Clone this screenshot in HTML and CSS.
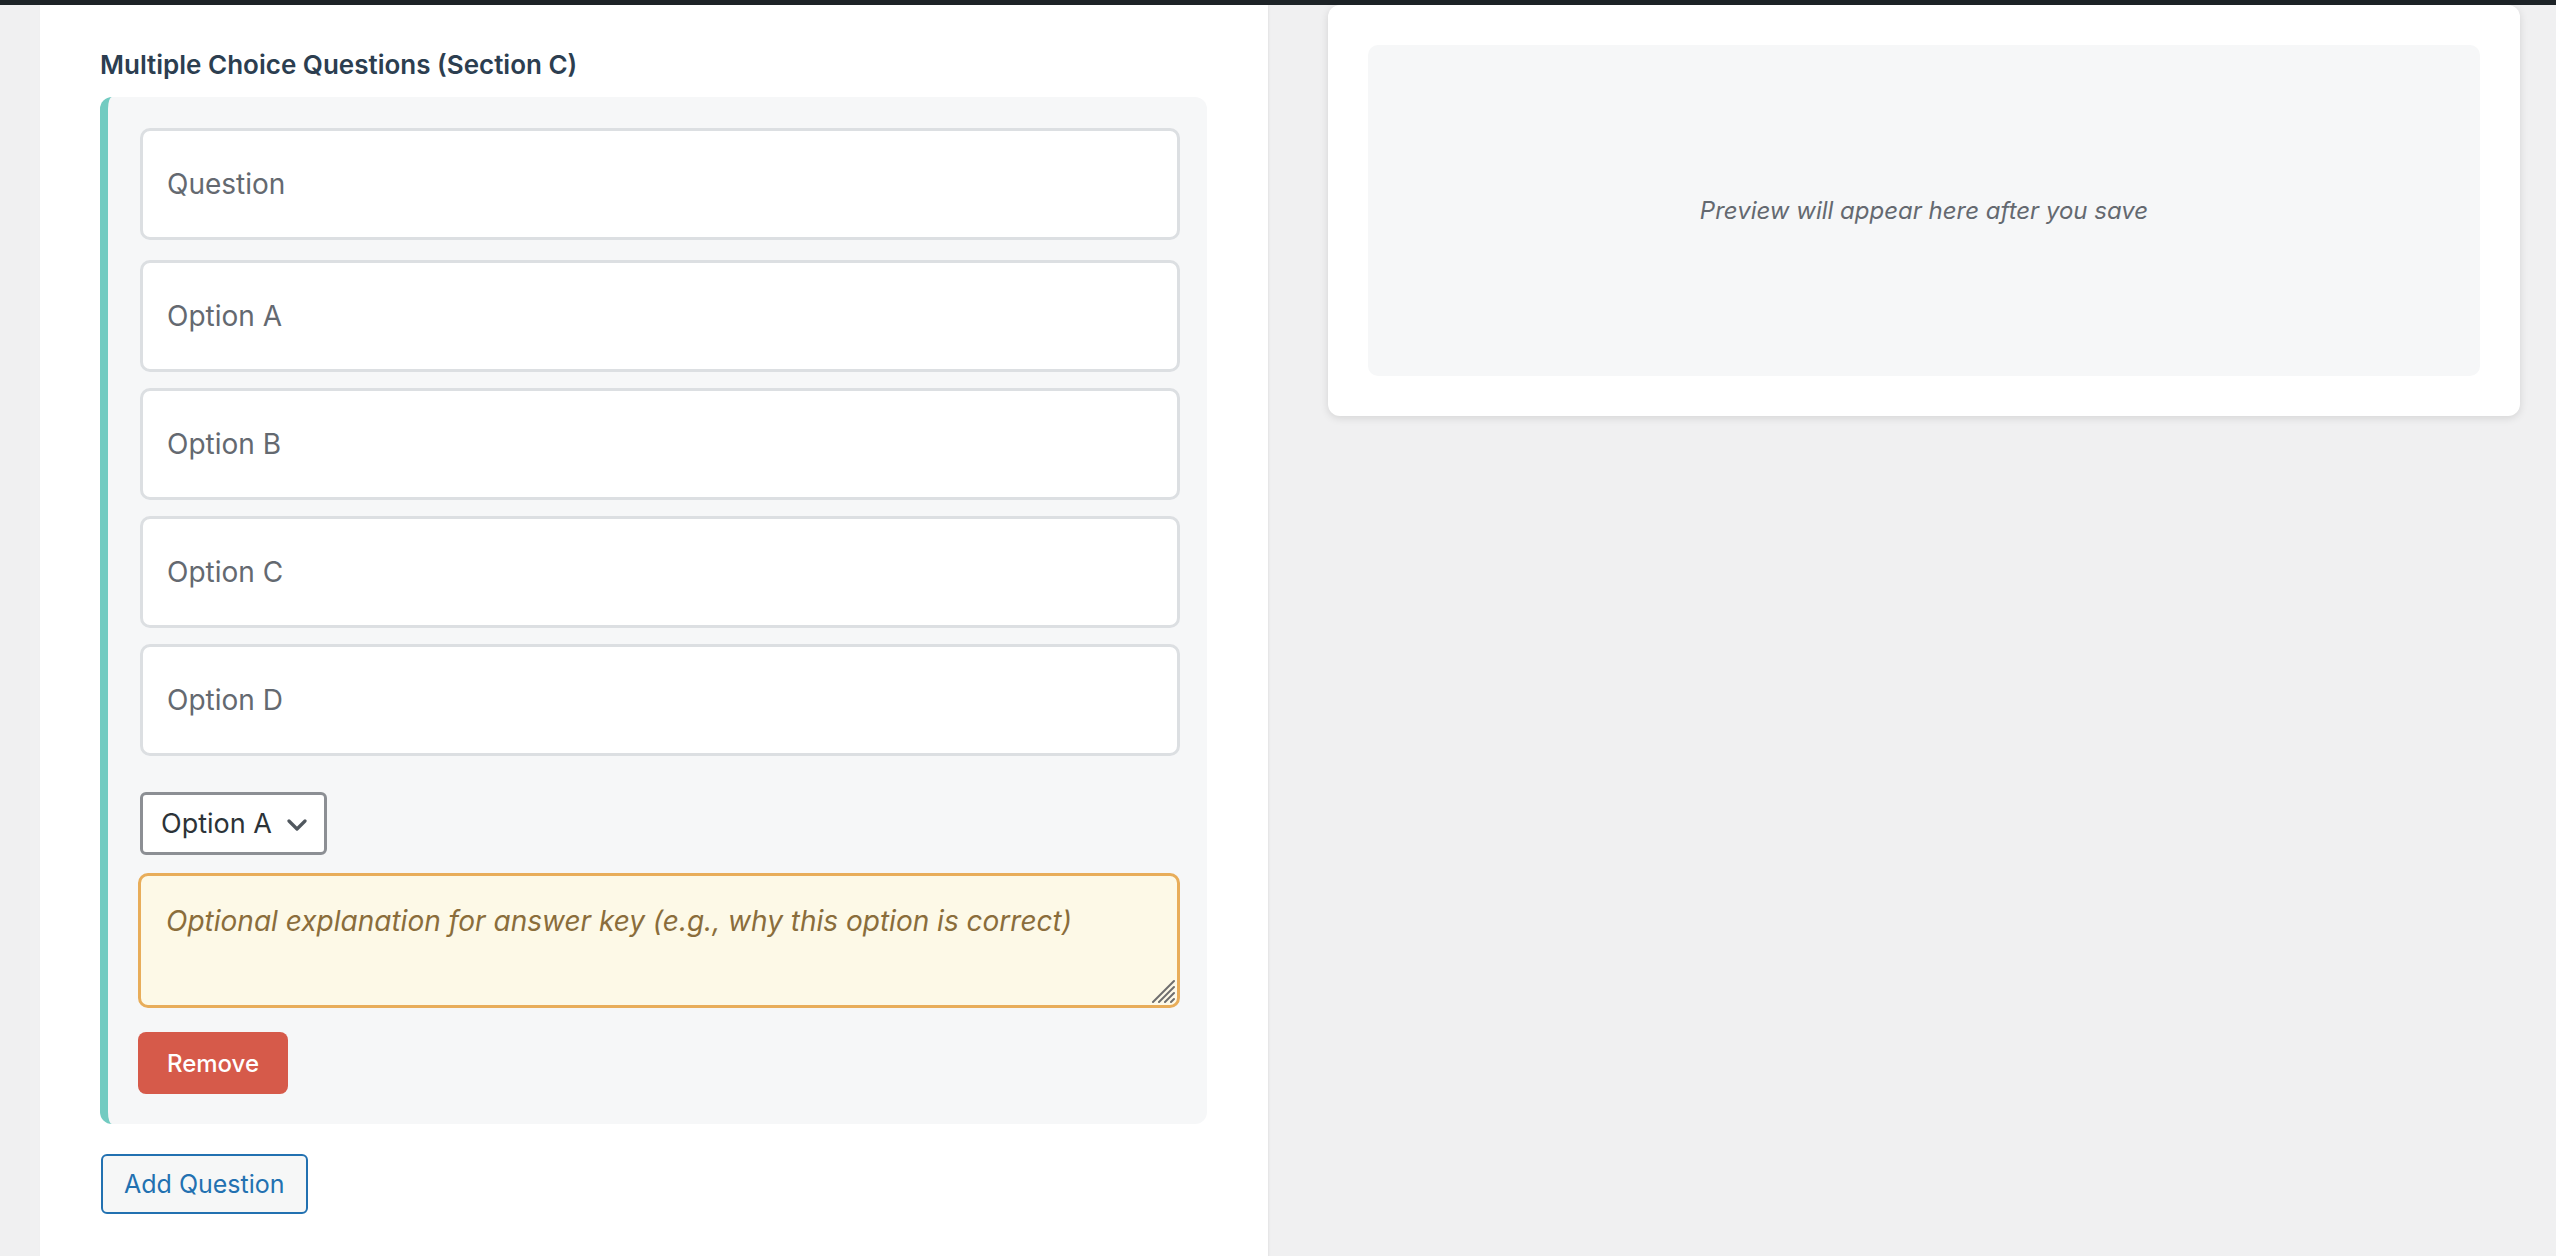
FILE: index.html
```html
<!DOCTYPE html>
<html lang="en">
<head>
  <meta charset="UTF-8">
  <meta name="viewport" content="width=device-width, initial-scale=1.0">
  <title>Exam Builder</title>
  <link rel="stylesheet" href="styles.css">
</head>
<body>
  <div class="topbar"></div>

  <div class="layout">
    <div class="editor-card">
      <h3 class="section-title">Multiple Choice Questions (Section C)</h3>

      <div class="question-block">
        <input class="field field-question" type="text" placeholder="Question">
        <input class="field" type="text" placeholder="Option A">
        <input class="field" type="text" placeholder="Option B">
        <input class="field" type="text" placeholder="Option C">
        <input class="field" type="text" placeholder="Option D">

        <div class="select-wrap">
          <select class="answer-select">
            <option>Option A</option>
            <option>Option B</option>
            <option>Option C</option>
            <option>Option D</option>
          </select>
          <svg class="chevron" width="20" height="12" viewBox="0 0 20 12">
            <path d="M2 2 L10 10 L18 2" fill="none" stroke="#50575e" stroke-width="3.2" stroke-linecap="round" stroke-linejoin="round"/>
          </svg>
        </div>

        <div class="explanation-wrap">
          <textarea class="explanation" placeholder="Optional explanation for answer key (e.g., why this option is correct)"></textarea>
          <!-- resize grip -->
          <svg class="grip" width="24" height="24" viewBox="0 0 24 24">
            <g stroke="#6e6e6e" stroke-width="2" stroke-linecap="round">
              <path d="M2 23 L23 2"/>
              <path d="M8 23 L23 8"/>
              <path d="M14 23 L23 14"/>
              <path d="M20 23 L23 20"/>
            </g>
          </svg>
        </div>

        <button class="btn-remove">Remove</button>
      </div>

      <button class="btn-add">Add Question</button>
    </div>

    <div class="preview-card">
      <div class="preview-box">
        <em>Preview will appear here after you save</em>
      </div>
    </div>
  </div>
</body>
</html>
```

FILE: styles.css
```css
html, body {
  margin: 0;
  height: 100%;
  overflow: hidden;
  background: #f0f0f1;
  font-family: Inter, "Noto Sans", sans-serif;
  color: #2c3338;
}

.topbar {
  height: 5px;
  background: #1d2327;
}

.layout {
  display: flex;
  align-items: flex-start;
  gap: 60px;
  padding: 0 36px 0 40px;
}

/* ---------- left: editor ---------- */
.editor-card {
  width: 1228px;
  flex-shrink: 0;
  box-sizing: border-box;
  min-height: 1300px;
  padding: 43px 61px 40px 60px;
  background: #fff;
  box-shadow: 1px 0 2px rgba(0, 0, 0, .06);
}

.section-title {
  margin: 0 0 16px;
  font-size: 26px;
  line-height: 33px;
  font-weight: 600;
  color: #2c3e50;
}

.question-block {
  padding: 31px 27px 30px 32px;
  border-left: 8px solid #72cbc1;
  border-radius: 12px;
  background: #f6f7f8;
}

.field {
  display: block;
  width: 100%;
  height: 112px;
  box-sizing: border-box;
  margin: 0 0 16px;
  padding: 0 24px;
  border: 3px solid #dcdfe2;
  border-radius: 10px;
  background: #fff;
  font-family: inherit;
  font-size: 28px;
  color: #2c3338;
  outline: none;
}

.field-question {
  margin-bottom: 20px;
}

.field::placeholder {
  color: #646970;
}

.select-wrap {
  position: relative;
  display: inline-block;
  margin-top: 20px;
}

.answer-select {
  -webkit-appearance: none;
  appearance: none;
  width: 187px;
  height: 63px;
  box-sizing: border-box;
  padding: 0 50px 0 18px;
  border: 3px solid #8c8f94;
  border-radius: 6px;
  background: #fff;
  font-family: inherit;
  font-size: 27px;
  color: #2c3338;
}

.chevron {
  position: absolute;
  right: 20px;
  top: 27px;
  pointer-events: none;
}

.explanation-wrap {
  position: relative;
  margin: 18px 0 24px -2px;
}

.explanation {
  display: block;
  width: 100%;
  height: 135px;
  box-sizing: border-box;
  padding: 27px 25px 20px;
  border: 3px solid #e8ad5a;
  border-radius: 10px;
  background: #fdf9e7;
  font-family: inherit;
  font-size: 28px;
  font-style: italic;
  line-height: 36px;
  color: #8a6d3b;
  outline: none;
  resize: none;
}

.explanation::placeholder {
  color: #8a6d3b;
}

.grip {
  position: absolute;
  right: 5px;
  bottom: 5px;
  pointer-events: none;
}

.btn-remove {
  display: block;
  margin-left: -2px;
  width: 150px;
  height: 62px;
  border: none;
  border-radius: 8px;
  background: #d65a4a;
  color: #fff;
  font-family: inherit;
  font-size: 24px;
  font-weight: 500;
}

.btn-add {
  margin: 30px 0 0 1px;
  height: 60px;
  padding: 0 21px;
  border: 2px solid #2271b1;
  border-radius: 6px;
  background: #f6f7f7;
  color: #2271b1;
  font-family: inherit;
  font-size: 25px;
}

/* ---------- right: preview ---------- */
.preview-card {
  flex: 1;
  padding: 40px;
  background: #fff;
  border-radius: 12px;
  box-shadow: 0 2px 8px rgba(0, 0, 0, .12);
}

.preview-box {
  height: 331px;
  display: flex;
  align-items: center;
  justify-content: center;
  border-radius: 10px;
  background: #f6f7f8;
  color: #646970;
  font-size: 24px;
}
```
